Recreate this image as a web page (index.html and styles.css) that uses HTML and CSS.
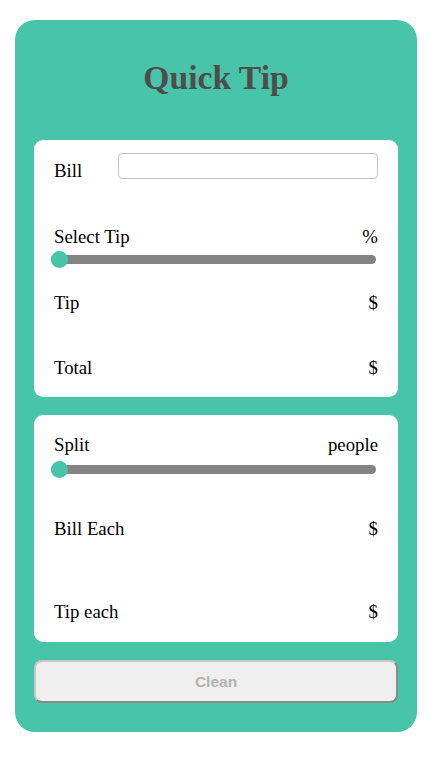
FILE: index.html
```html
<!DOCTYPE html>
<html lang="en">
<head>
<meta charset="utf-8">
<title>Quick Tip</title>
<link rel="stylesheet" href="styles.css">
</head>
<body>
<main class="app">
  <h1 class="title">Quick Tip</h1>

  <section class="card card-bill">
    <div class="row row-bill">
      <label class="label label-bill" for="bill">Bill</label>
      <input id="bill" class="bill-input" type="text">
    </div>
    <div class="row row-select">
      <span class="label">Select Tip</span>
      <span class="value">%</span>
    </div>
    <input class="slider slider-tip" type="range" min="0" max="50" value="0">
    <div class="row row-tip">
      <span class="label">Tip</span>
      <span class="value">$</span>
    </div>
    <div class="row row-total">
      <span class="label">Total</span>
      <span class="value">$</span>
    </div>
  </section>

  <section class="card card-split">
    <div class="row row-split">
      <span class="label">Split</span>
      <span class="value">people</span>
    </div>
    <input class="slider slider-split" type="range" min="1" max="20" value="1">
    <div class="row row-bill-each">
      <span class="label">Bill Each</span>
      <span class="value">$</span>
    </div>
    <div class="row row-tip-each">
      <span class="label">Tip each</span>
      <span class="value">$</span>
    </div>
  </section>

  <button class="clean-btn" type="button">Clean</button>
</main>
</body>
</html>
```

FILE: styles.css
```css
html, body {
  margin: 0;
  padding: 0;
  background: #ffffff;
}

body {
  font-family: "Liberation Serif", "Times New Roman", serif;
  color: #000000;
}

.app {
  box-sizing: border-box;
  width: 402px;
  margin: 20px 0 0 15px;
  padding: 39px 19px 29px 19px;
  background: #48c4a8;
  border-radius: 20px;
  display: flex;
  flex-direction: column;
}

.title {
  margin: 0;
  font-family: "Liberation Serif", "Times New Roman", serif;
  font-weight: bold;
  font-size: 33.6px;
  line-height: 38px;
  text-align: center;
  color: #4d4d4d;
}

.card {
  background: #ffffff;
  border-radius: 9px;
  padding: 0 20px;
  display: flex;
  flex-direction: column;
  font-size: 18.8px;
  line-height: 21px;
}

.card-bill {
  margin-top: 43px;
  padding-top: 13px;
  padding-bottom: 19px;
}

.card-split {
  margin-top: 18px;
  padding-top: 19px;
  padding-bottom: 20px;
}

.row {
  display: flex;
  justify-content: space-between;
  align-items: flex-start;
}

.row-bill {
  height: 26px;
}

.label-bill {
  margin-top: 7px;
}

.bill-input {
  box-sizing: border-box;
  width: 260px;
  height: 26px;
  margin: 0;
  border: 1px solid #c2c2c2;
  border-radius: 4px;
  background: #ffffff;
  padding: 0 6px;
  font-size: 16px;
  outline: none;
}

.row-select { margin-top: 47px; }
.row-tip { margin-top: 24px; }
.row-total { margin-top: 44px; }
.row-bill-each { margin-top: 40px; }
.row-tip-each { margin-top: 62px; }

.slider {
  -webkit-appearance: none;
  appearance: none;
  display: block;
  width: 325px;
  height: 17px;
  margin: 4px 0 0 -3px;
  padding: 0;
  background: transparent;
  outline: none;
}

.slider-split {
  margin-top: 6px;
}

.slider::-webkit-slider-runnable-track {
  height: 9px;
  background: #838383;
  border-radius: 5px;
  border: none;
}

.slider::-webkit-slider-thumb {
  -webkit-appearance: none;
  appearance: none;
  width: 17px;
  height: 17px;
  margin-top: -4px;
  border: none;
  border-radius: 50%;
  background: #48c4a8;
}

.clean-btn {
  box-sizing: border-box;
  margin-top: 18px;
  height: 43px;
  width: 100%;
  border-style: solid;
  border-width: 2px;
  border-color: #c9c9c9 #8a8a8a #8a8a8a #c9c9c9;
  border-radius: 8px;
  background: #efefef;
  font-family: "Liberation Sans", Arial, sans-serif;
  font-weight: bold;
  font-size: 15.5px;
  color: #b3b3b3;
  padding: 0;
}
```
